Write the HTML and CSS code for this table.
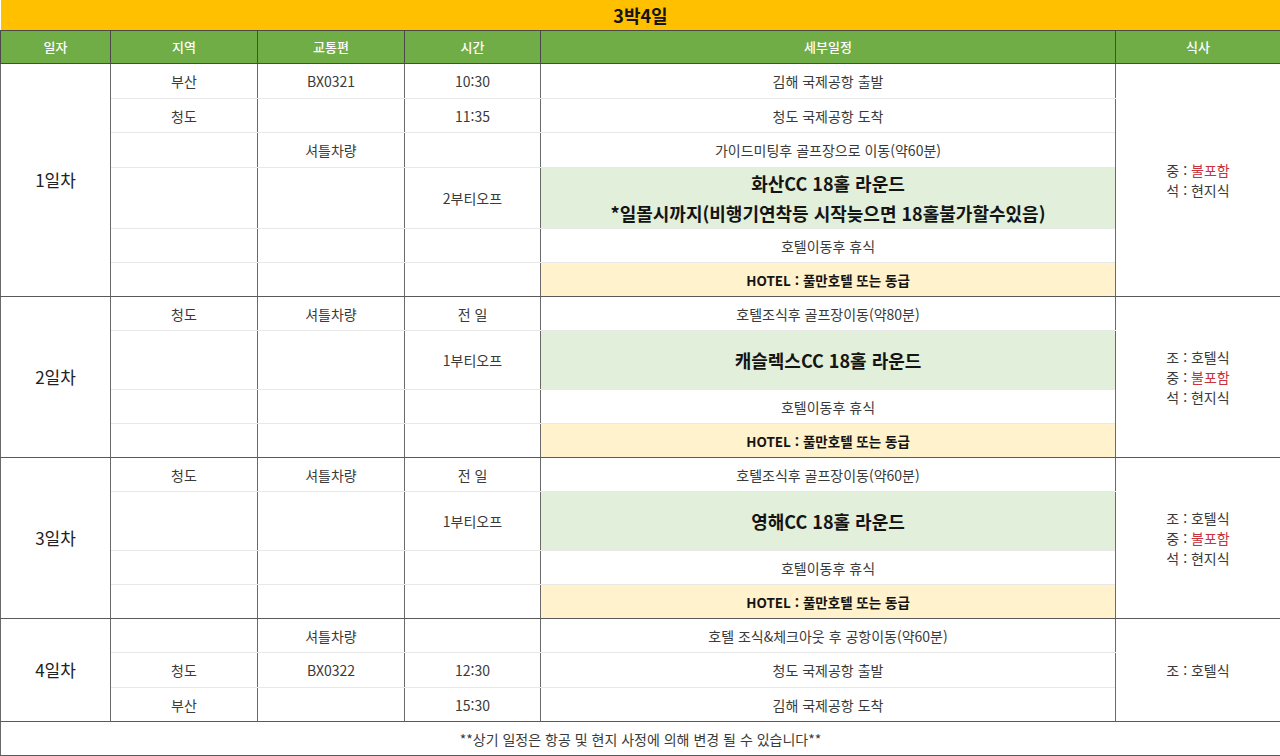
FILE: index.html
```html
<!DOCTYPE html>
<html lang="ko">
<head>
<meta charset="utf-8">
<title>3박4일</title>
<link rel="stylesheet" href="styles.css">
</head>
<body>
<table class="sched">
  <colgroup>
    <col class="c-day"><col class="c-area"><col class="c-trans"><col class="c-time"><col class="c-detail"><col class="c-meal">
  </colgroup>
  <thead>
    <tr class="title"><th colspan="6">3박4일</th></tr>
    <tr class="head"><th>일자</th><th>지역</th><th>교통편</th><th>시간</th><th>세부일정</th><th>식사</th></tr>
  </thead>
  <tbody class="day">
    <tr class="r35"><td class="dayname" rowspan="6">1일차</td><td>부산</td><td>BX0321</td><td>10:30</td><td>김해 국제공항 출발</td><td class="meal" rowspan="6">중 : <span class="red">불포함</span><br>석 : 현지식</td></tr>
    <tr><td>청도</td><td></td><td>11:35</td><td>청도 국제공항 도착</td></tr>
    <tr class="r35"><td></td><td>셔틀차량</td><td></td><td>가이드미팅후 골프장으로 이동(약60분)</td></tr>
    <tr class="tall2"><td></td><td></td><td>2부티오프</td><td class="golf">화산CC 18홀 라운드<br>*일몰시까지(비행기연착등 시작늦으면 18홀불가할수있음)</td></tr>
    <tr><td></td><td></td><td></td><td>호텔이동후 휴식</td></tr>
    <tr class="last"><td></td><td></td><td></td><td class="hotel">HOTEL : 풀만호텔 또는 동급</td></tr>
  </tbody>
  <tbody class="day">
    <tr><td class="dayname" rowspan="4">2일차</td><td>청도</td><td>셔틀차량</td><td>전 일</td><td>호텔조식후 골프장이동(약80분)</td><td class="meal" rowspan="4">조 : 호텔식<br>중 : <span class="red">불포함</span><br>석 : 현지식</td></tr>
    <tr class="tall"><td></td><td></td><td>1부티오프</td><td class="golf">캐슬렉스CC 18홀 라운드</td></tr>
    <tr><td></td><td></td><td></td><td>호텔이동후 휴식</td></tr>
    <tr class="last"><td></td><td></td><td></td><td class="hotel">HOTEL : 풀만호텔 또는 동급</td></tr>
  </tbody>
  <tbody class="day">
    <tr><td class="dayname" rowspan="4">3일차</td><td>청도</td><td>셔틀차량</td><td>전 일</td><td>호텔조식후 골프장이동(약60분)</td><td class="meal" rowspan="4">조 : 호텔식<br>중 : <span class="red">불포함</span><br>석 : 현지식</td></tr>
    <tr class="tall"><td></td><td></td><td>1부티오프</td><td class="golf">영해CC 18홀 라운드</td></tr>
    <tr><td></td><td></td><td></td><td>호텔이동후 휴식</td></tr>
    <tr class="last"><td></td><td></td><td></td><td class="hotel">HOTEL : 풀만호텔 또는 동급</td></tr>
  </tbody>
  <tbody class="day">
    <tr><td class="dayname" rowspan="3">4일차</td><td></td><td>셔틀차량</td><td></td><td>호텔 조식&amp;체크아웃 후 공항이동(약60분)</td><td class="meal" rowspan="3">조 : 호텔식</td></tr>
    <tr class="r35"><td>청도</td><td>BX0322</td><td>12:30</td><td>청도 국제공항 출발</td></tr>
    <tr class="last"><td>부산</td><td></td><td>15:30</td><td>김해 국제공항 도착</td></tr>
  </tbody>
  <tfoot>
    <tr class="foot"><td colspan="6">**상기 일정은 항공 및 현지 사정에 의해 변경 될 수 있습니다**</td></tr>
  </tfoot>
</table>
</body>
</html>
```

FILE: styles.css
```css
html, body {
  margin: 0;
  padding: 0;
  background: #ffffff;
}

.sched {
  width: 1280px;
  border-collapse: collapse;
  table-layout: fixed;
  font-family: "Noto Sans CJK KR", "Noto Sans", sans-serif;
  font-size: 14px;
  color: #3a3a3a;
}

.c-day { width: 110px; }
.c-area { width: 147px; }
.c-trans { width: 147px; }
.c-time { width: 136px; }
.c-detail { width: 575px; }
.c-meal { width: 165px; }

.sched td,
.sched th {
  padding: 0;
  text-align: center;
  vertical-align: middle;
  border-left: 1px solid #6a6a6a;
  border-right: 1px solid #6a6a6a;
  border-top: 1px solid #e8e8e8;
  border-bottom: 1px solid #e8e8e8;
  line-height: 20px;
}

.sched .title th {
  height: 30px;
  background: #ffc000;
  color: #141414;
  font-size: 18px;
  font-weight: 700;
  border: none;
  border-bottom: 1px solid #4a4a4a;
}

.sched .head th {
  height: 32px;
  background: #70ad47;
  color: #ffffff;
  font-weight: 500;
  font-size: 13px;
  border: 1px solid #4a4a4a;
}

.sched tbody tr { height: 34px; }
.sched tbody tr.r35 { height: 35px; }
.sched tbody tr.tall { height: 59px; }
.sched tbody tr.tall2 { height: 61px; }

.sched tbody tr:first-child td {
  border-top: 1px solid #5a5a5a;
}
.sched tbody tr.last td,
.sched td.dayname,
.sched td.meal {
  border-bottom: 1px solid #5a5a5a;
}

.sched td.dayname {
  font-size: 17px;
  color: #222222;
}

.red {
  color: #c8323c;
}

.sched td.golf {
  background: #e2efda;
  font-size: 18px;
  font-weight: 700;
  color: #141414;
  line-height: 30px;
}

.sched td.hotel {
  background: #fff2cc;
  font-size: 13.5px;
  font-weight: 700;
  color: #141414;
}

.sched .foot td {
  height: 33px;
  border-top: 1px solid #5a5a5a;
  border-bottom: 1px solid #5a5a5a;
}
```
